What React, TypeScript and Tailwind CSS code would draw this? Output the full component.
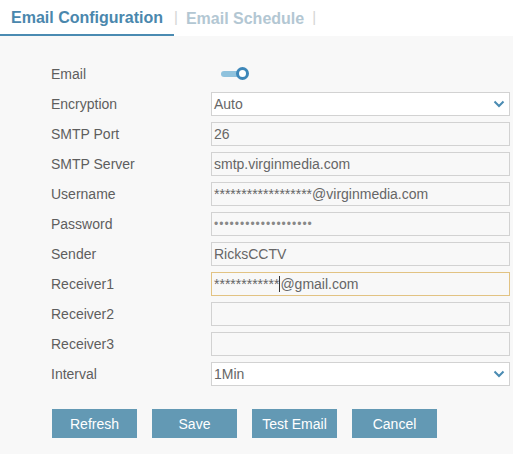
const font = { fontFamily: '"Liberation Sans", Arial, sans-serif' };

function Chevron() {
  return (
    <svg width="12" height="8" viewBox="0 0 12 8" className="absolute right-[4px] top-1/2 -translate-y-1/2">
      <polyline points="1.5,1.5 6,6 10.5,1.5" fill="none" stroke="#4a8bb2" strokeWidth="2" />
    </svg>
  );
}

function Field({ children, select, focus }: { children?: React.ReactNode; select?: boolean; focus?: boolean }) {
  return (
    <div
      className={
        'relative flex items-center w-[299px] h-[24px] pl-[2px] text-[14px] text-[#666] border ' +
        (select ? 'bg-white ' : 'bg-[#f8f8f8] ') +
        (focus ? 'border-[#e2c383]' : 'border-[#d2d2d2]')
      }
    >
      {children}
      {select && <Chevron />}
    </div>
  );
}

function Row({ label, children }: { label: string; children: React.ReactNode }) {
  return (
    <div className="flex items-center h-[30px]">
      <div className="w-[160px] text-[14px] text-[#5e5e5e]">{label}</div>
      {children}
    </div>
  );
}

export default function App() {
  const buttons = ['Refresh', 'Save', 'Test Email', 'Cancel'];
  return (
    <div className="w-[513px] h-[454px] bg-[#f8f8f8] overflow-hidden" style={font}>
      <div className="flex items-end h-[36px] bg-white">
        <div className="px-[11px] h-[36px] flex items-center pt-[1px] border-b-2 border-[#4a8bb2] text-[16px] font-bold text-[#4a87ad]">
          Email Configuration
        </div>
        <div className="h-[36px] flex items-center text-[15px] text-[#d4d4d4] pb-[1px]">|</div>
        <div className="px-[8px] h-[36px] flex items-center pt-[1px] text-[16px] font-bold text-[#b3c7d3]">
          Email Schedule
        </div>
        <div className="h-[36px] flex items-center text-[15px] text-[#d4d4d4] pb-[1px]">|</div>
      </div>

      <div className="pl-[51px] pt-[23px]">
        <Row label="Email">
          <div className="relative ml-[10px] w-[28px] h-[14px]">
            <div className="absolute left-0 top-[4px] w-[22px] h-[6px] rounded-full bg-[#8fc2dd]" />
            <div className="absolute right-0 top-0 w-[13px] h-[13px] rounded-full border-[3px] border-[#3d87b9] bg-white" />
          </div>
        </Row>
        <Row label="Encryption">
          <Field select>Auto</Field>
        </Row>
        <Row label="SMTP Port">
          <Field>26</Field>
        </Row>
        <Row label="SMTP Server">
          <Field>smtp.virginmedia.com</Field>
        </Row>
        <Row label="Username">
          <Field>******************@virginmedia.com</Field>
        </Row>
        <Row label="Password">
          <Field>
            <span className="text-[12px] tracking-[1px] text-[#888]">•••••••••••••••••••</span>
          </Field>
        </Row>
        <Row label="Sender">
          <Field>RicksCCTV</Field>
        </Row>
        <Row label="Receiver1">
          <Field focus>
            ************
            <span className="inline-block w-px h-[16px] bg-[#333]" />
            @gmail.com
          </Field>
        </Row>
        <Row label="Receiver2">
          <Field />
        </Row>
        <Row label="Receiver3">
          <Field />
        </Row>
        <Row label="Interval">
          <Field select>1Min</Field>
        </Row>

        <div className="flex gap-[15px] mt-[20px] ml-[1px]">
          {buttons.map((b) => (
            <button
              key={b}
              className="w-[85px] h-[29px] pt-[2px] bg-[#6399b4] text-white text-[14px] flex items-center justify-center"
            >
              {b}
            </button>
          ))}
        </div>
      </div>
    </div>
  );
}
